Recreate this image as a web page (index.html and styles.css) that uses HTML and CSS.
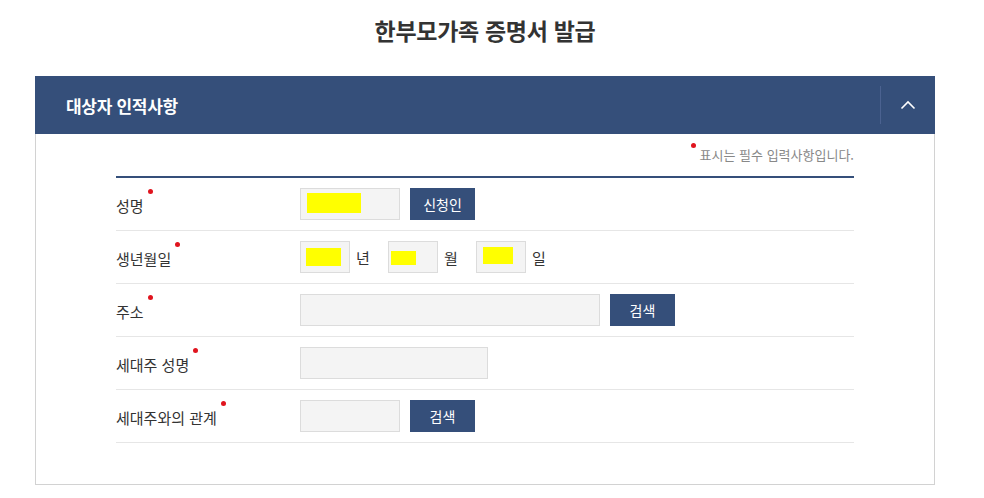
FILE: index.html
```html
<!DOCTYPE html>
<html lang="ko">
<head>
<meta charset="utf-8">
<title>한부모가족 증명서 발급</title>
<link rel="stylesheet" href="styles.css">
</head>
<body>
<div class="page">
  <h1 class="title">한부모가족 증명서 발급</h1>
  <section class="panel">
    <header class="panel-head">
      <h2 class="panel-title">대상자 인적사항</h2>
      <button class="toggle" type="button" aria-label="접기">
        <svg width="16" height="10" viewBox="0 0 16 10"><polyline points="1.5,8.5 8,2 14.5,8.5" fill="none" stroke="#fff" stroke-width="1.6"/></svg>
      </button>
    </header>
    <div class="panel-body">
      <p class="note"><span class="req"></span>표시는 필수 입력사항입니다.</p>
      <div class="form">
        <div class="row">
          <div class="label">성명<span class="req"></span></div>
          <div class="ctrl">
            <div class="field w100"><span class="mask m1"></span></div>
            <button class="btn" type="button">신청인</button>
          </div>
        </div>
        <div class="row">
          <div class="label">생년월일<span class="req"></span></div>
          <div class="ctrl date">
            <div class="field w50"><span class="mask m2"></span></div><span class="unit">년</span>
            <div class="field w50"><span class="mask m3"></span></div><span class="unit">월</span>
            <div class="field w50"><span class="mask m4"></span></div><span class="unit">일</span>
          </div>
        </div>
        <div class="row">
          <div class="label">주소<span class="req"></span></div>
          <div class="ctrl">
            <div class="field w300"></div>
            <button class="btn" type="button">검색</button>
          </div>
        </div>
        <div class="row">
          <div class="label">세대주 성명<span class="req"></span></div>
          <div class="ctrl">
            <div class="field w188"></div>
          </div>
        </div>
        <div class="row">
          <div class="label">세대주와의 관계<span class="req"></span></div>
          <div class="ctrl">
            <div class="field w100"></div>
            <button class="btn" type="button">검색</button>
          </div>
        </div>
      </div>
    </div>
  </section>
</div>
</body>
</html>
```
FILE: styles.css
```css
* { box-sizing: border-box; }
html, body { margin: 0; padding: 0; background: #fff; }
body {
  font-family: "Noto Sans CJK KR", "Noto Sans", sans-serif;
  color: #333;
}
.page {
  width: 970px;
  padding-top: 12px;
}
.title {
  margin: 0;
  text-align: center;
  font-size: 23px;
  line-height: 36px;
  font-weight: 700;
  letter-spacing: -0.3px;
  color: #333;
}
.panel {
  width: 900px;
  margin: 28px auto 0;
}
.panel-head {
  height: 58px;
  background: #354f7a;
  display: flex;
  align-items: center;
  justify-content: space-between;
  padding-left: 31px;
}
.panel-title {
  margin: 0;
  color: #fff;
  font-size: 17px;
  font-weight: 700;
  letter-spacing: -0.3px;
}
.toggle {
  width: 55px;
  height: 38px;
  border: 0;
  border-left: 1px solid #4b6290;
  background: transparent;
  padding: 0;
  display: flex;
  align-items: center;
  justify-content: center;
  cursor: pointer;
}
.panel-body {
  border: 1px solid #d2d2d2;
  border-top: 0;
  padding: 0 80px 41px;
  height: 351px;
}
.note {
  margin: 0;
  padding-top: 13px;
  height: 42px;
  text-align: right;
  font-size: 13px;
  line-height: 16px;
  color: #888;
}
.note .req {
  position: relative;
  top: -4px;
  margin-right: 4px;
}
.req {
  display: inline-block;
  width: 5px;
  height: 5px;
  border-radius: 50%;
  background: #e0141e;
  vertical-align: top;
}
.form {
  border-top: 2px solid #354f7a;
}
.row {
  display: grid;
  grid-template-columns: 184px 1fr;
  align-items: center;
  height: 53px;
  border-bottom: 1px solid #e6e6e6;
}
.label {
  font-size: 15px;
  line-height: 20px;
  color: #333;
  padding-top: 4px;
}
.label .req {
  position: relative;
  top: -7px;
  margin-left: 4px;
}
.ctrl {
  display: flex;
  align-items: center;
  gap: 10px;
}
.field {
  position: relative;
  height: 32px;
  background: #f4f4f4;
  border: 1px solid #dcdcdc;
}
.w50 { width: 50px; }
.w100 { width: 100px; }
.w188 { width: 188px; }
.w300 { width: 300px; }
.mask {
  position: absolute;
  background: #ffff00;
}
.m1 { left: 6px; top: 4px; width: 54px; height: 20px; }
.m2 { left: 5px; top: 6px; width: 35px; height: 18px; }
.m3 { left: 2px; top: 9px; width: 25px; height: 14px; }
.m4 { left: 6px; top: 5px; width: 30px; height: 17px; }
.date { gap: 0; }
.unit {
  font-size: 15px;
  width: 38px;
  padding-left: 6px;
  color: #333;
}
.btn {
  height: 32px;
  width: 65px;
  border: 0;
  background: #354f7a;
  color: #fff;
  font-family: inherit;
  font-size: 14px;
  padding: 0;
  cursor: pointer;
}
```
